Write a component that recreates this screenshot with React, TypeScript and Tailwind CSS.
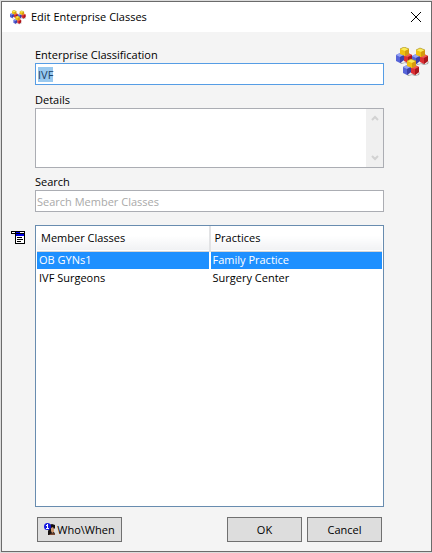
import { useEffect, useRef } from 'react';

const members = [
    { name: 'OB GYNs1', practice: 'Family Practice', selected: true },
    { name: 'IVF Surgeons', practice: 'Surgery Center', selected: false },
];

function Cluster({ x, y }: { x: number; y: number }) {
    return (
        <g transform={`translate(${x} ${y})`}>
            <path d="M1 12l5 4 5-1 3 1 3-3-1 3-4 1-3-1-4 1z" fill="#a3a3a3" />
            <path d="M0 8l4-2 4 2v5l-4 3-4-2z" fill="#5563d8" />
            <path d="M0 8l4-2 4 2-4 2z" fill="#98a4f2" />
            <path d="M4 10l4-2v5l-4 3z" fill="#3c3fa8" />
            <path d="M8 9l4-3 4 2v5l-4 3-4-2z" fill="#dc2f34" />
            <path d="M8 9l4-3 4 2-4 2z" fill="#ee5a52" />
            <path d="M12 10l4-2v5l-4 3z" fill="#a8161c" />
            <path d="M4 2l4-2 5 2v5l-4 2-5-2z" fill="#f0c010" />
            <path d="M4 2l4-2 5 2-4 2z" fill="#fbea58" />
            <path d="M9 4l4-2v5l-4 2z" fill="#d39a10" />
            <path d="M4 2l4-2 5 2" fill="none" stroke="#8f7a20" strokeWidth="1" strokeOpacity="0.5" />
        </g>
    );
}

function CubesIcon({ className }: { className: string }) {
    return (
        <svg viewBox="0 0 33 30" className={className} aria-hidden="true">
            <Cluster x={0} y={0} />
            <Cluster x={16} y={1} />
            <Cluster x={7} y={12} />
        </svg>
    );
}

function MenuIcon() {
    return (
        <svg viewBox="0 0 14 13" className="w-[14px] h-[13px]" shapeRendering="crispEdges" aria-hidden="true">
            <path d="M4 2h10v11H4z" fill="#000" />
            <path d="M5 5h8v7H5z" fill="#fff" />
            <path d="M5 3h8v2H5z" fill="#0000e8" />
            <path d="M0 0h14v3H0z" fill="#000" />
            <path d="M1 1h3v1H1zM9 1h4v1H9z" fill="#fff" />
            <path d="M5 1h4v1H5z" fill="#0000e8" />
            <path d="M6 6h5v1H6zM6 8h6v1H6zM6 10h4v1H6z" fill="#000" />
        </svg>
    );
}

function PersonIcon() {
    return (
        <svg viewBox="0 0 12 13" className="w-3 h-[13px]" aria-hidden="true">
            <path d="M5 2l3-1 3 1v3l-1 1v3l1 2v1H4V8l1-2z" fill="#141010" />
            <path d="M7 5l2-1 1 2v3l-2 1-1-2z" fill="#d29a70" />
            <path d="M6 11l3-1 2 1v1H5z" fill="#7b4a34" />
            <circle cx="3.5" cy="3.5" r="3.5" fill="#1418e0" />
            <path d="M3 1h1v4h1v1H2V5h1V3H2V2h1z" fill="#fff" />
        </svg>
    );
}

export default function App() {
    const classification = useRef<HTMLInputElement>(null);

    useEffect(() => {
        classification.current?.focus();
        classification.current?.select();
    }, []);

    return (
        <div className="h-screen bg-[#dcdcdc] pt-px pl-px pb-px font-['Open_Sans',sans-serif] text-[11px] leading-4 text-black">
            <div className="h-full flex flex-col border border-[#6b6b6b] bg-[#f4f4f4]">
                <header className="h-[30px] shrink-0 flex items-center bg-white pl-2 pr-[10px]">
                    <CubesIcon className="w-4 h-[15px]" />
                    <h1 className="ml-[5px] flex-1">Edit Enterprise Classes</h1>
                    <button type="button" aria-label="Close">
                        <svg viewBox="0 0 10 10" className="w-[10px] h-[10px]" fill="none" stroke="#000">
                            <path d="M0 0l10 10M10 0L0 10" />
                        </svg>
                    </button>
                </header>

                <main className="flex-1 min-h-0 flex pt-[15px] pb-[9px]">
                    <div className="w-[33px] shrink-0 pl-[9px] pt-[184px]">
                        <button type="button" aria-label="Member options" className="block">
                            <MenuIcon />
                        </button>
                    </div>

                    <form className="flex-1 min-w-0 flex flex-col">
                        <label htmlFor="classification">Enterprise Classification</label>
                        <input
                            id="classification"
                            ref={classification}
                            defaultValue="IVF"
                            className="h-[22px] shrink-0 border border-[#569de5] bg-white px-[2px] outline-none selection:bg-[#99c9ef] selection:text-[#1b3f66]"
                        />

                        <label htmlFor="details" className="mt-[7px]">Details</label>
                        <div className="h-[60px] shrink-0 flex border border-[#abadb3] bg-white">
                            <textarea id="details" className="flex-1 min-w-0 resize-none px-[2px] outline-none overflow-hidden" />
                            <div className="w-[17px] flex flex-col items-center justify-between bg-[#f0f0f0] py-[6px]">
                                <svg viewBox="0 0 8 6" className="w-2 h-[6px]" fill="none" stroke="#d2d2d2" strokeWidth="2">
                                    <path d="M1 5l3-3 3 3" />
                                </svg>
                                <svg viewBox="0 0 8 6" className="w-2 h-[6px]" fill="none" stroke="#d2d2d2" strokeWidth="2">
                                    <path d="M1 1l3 3 3-3" />
                                </svg>
                            </div>
                        </div>

                        <label htmlFor="search" className="mt-[6px]">Search</label>
                        <input
                            id="search"
                            placeholder="Search Member Classes"
                            className="h-[22px] shrink-0 border border-[#abadb3] bg-white px-px outline-none placeholder:text-[#a9a9a9]"
                        />

                        <div className="mt-[13px] flex-1 min-h-0 border border-[#688caf] bg-white px-px">
                            <table className="w-full table-fixed border-collapse text-left">
                                <thead>
                                    <tr className="h-[25px] border-b border-[#d5d5d5] bg-linear-to-b from-white from-40% to-[#f1f2f4]">
                                        <th className="w-1/2 pl-1 font-normal border-r-2 border-r-[#e2e3e5]">Member Classes</th>
                                        <th className="w-1/2 pl-1 font-normal">Practices</th>
                                    </tr>
                                </thead>
                                <tbody>
                                    {members.map((m) => (
                                        <tr
                                            key={m.name}
                                            className={m.selected ? 'h-[18px] bg-[#1e90ff] text-white border-b border-white' : 'h-[18px]'}
                                        >
                                            <td className="pl-[2px] border-r-2 border-white">{m.name}</td>
                                            <td className="pl-[2px]">{m.practice}</td>
                                        </tr>
                                    ))}
                                </tbody>
                            </table>
                        </div>

                        <div className="mt-[10px] flex px-[2px]">
                            <button type="button" className="w-[85px] h-[25px] flex items-center justify-center gap-px border border-[#707070] bg-[#dddddd]">
                                <PersonIcon />
                                Who\When
                            </button>
                            <button type="submit" className="ml-auto w-[75px] h-[25px] border border-[#707070] bg-[#dddddd]">OK</button>
                            <button type="button" className="ml-[5px] w-[75px] h-[25px] border border-[#707070] bg-[#dddddd]">Cancel</button>
                        </div>
                    </form>

                    <div className="w-[47px] shrink-0 pl-3">
                        <CubesIcon className="w-[33px] h-[30px]" />
                    </div>
                </main>
            </div>
        </div>
    );
}
